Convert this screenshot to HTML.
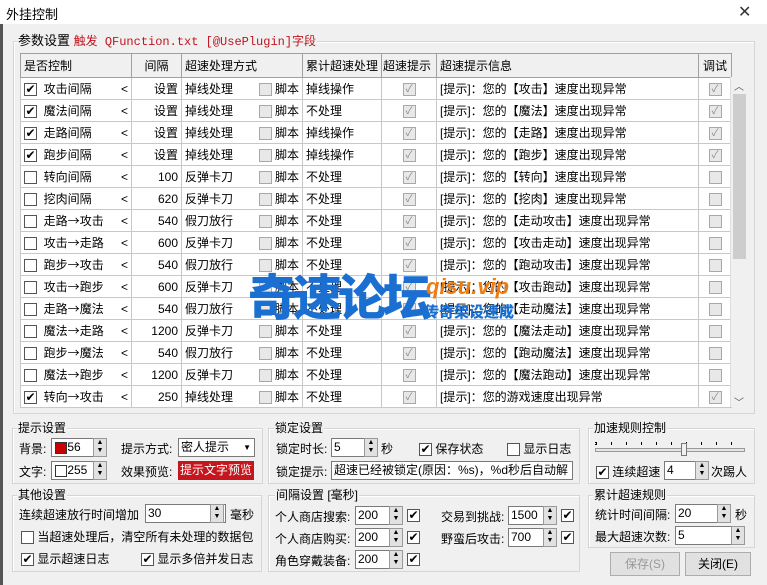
<!DOCTYPE html>
<html><head><meta charset="utf-8"><style>
*{box-sizing:border-box;margin:0;padding:0}
body{width:767px;height:585px;overflow:hidden;background:#f0f0f0;font:12px "Liberation Sans","Noto Sans CJK SC",sans-serif;color:#000;position:relative}
.a{position:absolute;white-space:nowrap}
.gb{position:absolute;border:1px solid #d5d5d5;box-shadow:inset 1px 1px 0 #fff}
.gt{position:absolute;background:#f0f0f0;padding:0 1px;line-height:14px}
table{position:absolute;left:20px;top:53px;border-collapse:collapse;background:#fff;table-layout:fixed}
td{border:1px solid #c8c8c8;height:22px;padding:0 3px;white-space:nowrap;overflow:hidden}
tr.h td{background:#f0f0f0;height:24px;border-color:#a0a0a0;border-bottom:1px solid #a0a0a0}
.cb{display:inline-block;width:13px;height:13px;border:1px solid #555;background:#fff;vertical-align:middle;position:relative;font-size:12px;line-height:11px;text-align:center}
.gc{display:inline-block;width:13px;height:13px;border:1px solid #a8a8a8;background:#e8e8e8;vertical-align:middle;color:#888;font-size:10px;line-height:11px;text-align:center}
.r{text-align:right}
.c{text-align:center}
.ar{font-family:"Noto Sans CJK SC",sans-serif}
.lt{float:right;margin-top:2px}
.in{position:absolute;background:#fff;border:1px solid #7a7a7a;height:19px;line-height:17px;padding-left:2px;font-size:12px}
.sp{position:absolute;width:14px;height:19px;background:#e1e1e1;border:1px solid #999;font-size:7px;line-height:8px;text-align:center;color:#000}
.btn{position:absolute;height:24px;border:1px solid #adadad;background:#e1e1e1;text-align:center;line-height:22px}
</style></head><body>
<div class="a" style="left:0;top:0;width:767px;height:24px;background:#fff"></div>
<div class="a" style="left:6px;top:4px;font-size:13px">外挂控制</div>
<div class="a" style="left:738px;top:2px;font-size:16px;color:#333">✕</div>
<div class="a" style="left:0;top:24px;width:3px;height:561px;background:#555"></div>

<div class="gb" style="left:13px;top:41px;width:742px;height:373px"></div>
<div class="gt" style="left:17px;top:34px;font-size:13px">参数设置 <span style="color:#c0141e;font-family:'Liberation Mono','Noto Sans CJK SC',monospace;font-size:12px">触发 QFunction.txt [@UsePlugin]字段</span></div>

<table>
<colgroup><col style="width:111px"><col style="width:50px"><col style="width:121px"><col style="width:78px"><col style="width:55px"><col style="width:262px"><col style="width:33px"></colgroup>
<tr class="h"><td>是否控制</td><td class="c">间隔</td><td>超速处理方式</td><td>累计超速处理</td><td style="padding:0 1px">超速提示</td><td>超速提示信息</td><td class="c">调试</td></tr>
<tr><td><span class="cb">✔</span>&nbsp; 攻击间隔<span class="lt">&lt;</span></td><td class="r">设置</td><td>掉线处理<span style="float:right"><span class="gc"></span> 脚本</span></td><td>掉线操作</td><td class="c"><span class="gc">✓</span></td><td>[提示]：您的【攻击】速度出现异常</td><td class="c"><span class="gc">✓</span></td></tr>
<tr><td><span class="cb">✔</span>&nbsp; 魔法间隔<span class="lt">&lt;</span></td><td class="r">设置</td><td>掉线处理<span style="float:right"><span class="gc"></span> 脚本</span></td><td>不处理</td><td class="c"><span class="gc">✓</span></td><td>[提示]：您的【魔法】速度出现异常</td><td class="c"><span class="gc">✓</span></td></tr>
<tr><td><span class="cb">✔</span>&nbsp; 走路间隔<span class="lt">&lt;</span></td><td class="r">设置</td><td>掉线处理<span style="float:right"><span class="gc"></span> 脚本</span></td><td>掉线操作</td><td class="c"><span class="gc">✓</span></td><td>[提示]：您的【走路】速度出现异常</td><td class="c"><span class="gc">✓</span></td></tr>
<tr><td><span class="cb">✔</span>&nbsp; 跑步间隔<span class="lt">&lt;</span></td><td class="r">设置</td><td>掉线处理<span style="float:right"><span class="gc"></span> 脚本</span></td><td>掉线操作</td><td class="c"><span class="gc">✓</span></td><td>[提示]：您的【跑步】速度出现异常</td><td class="c"><span class="gc">✓</span></td></tr>
<tr><td><span class="cb"></span>&nbsp; 转向间隔<span class="lt">&lt;</span></td><td class="r">100</td><td>反弹卡刀<span style="float:right"><span class="gc"></span> 脚本</span></td><td>不处理</td><td class="c"><span class="gc">✓</span></td><td>[提示]：您的【转向】速度出现异常</td><td class="c"><span class="gc"></span></td></tr>
<tr><td><span class="cb"></span>&nbsp; 挖肉间隔<span class="lt">&lt;</span></td><td class="r">620</td><td>反弹卡刀<span style="float:right"><span class="gc"></span> 脚本</span></td><td>不处理</td><td class="c"><span class="gc">✓</span></td><td>[提示]：您的【挖肉】速度出现异常</td><td class="c"><span class="gc"></span></td></tr>
<tr><td><span class="cb"></span>&nbsp; 走路<span class="ar">→</span>攻击<span class="lt">&lt;</span></td><td class="r">540</td><td>假刀放行<span style="float:right"><span class="gc"></span> 脚本</span></td><td>不处理</td><td class="c"><span class="gc">✓</span></td><td>[提示]：您的【走动攻击】速度出现异常</td><td class="c"><span class="gc"></span></td></tr>
<tr><td><span class="cb"></span>&nbsp; 攻击<span class="ar">→</span>走路<span class="lt">&lt;</span></td><td class="r">600</td><td>反弹卡刀<span style="float:right"><span class="gc"></span> 脚本</span></td><td>不处理</td><td class="c"><span class="gc">✓</span></td><td>[提示]：您的【攻击走动】速度出现异常</td><td class="c"><span class="gc"></span></td></tr>
<tr><td><span class="cb"></span>&nbsp; 跑步<span class="ar">→</span>攻击<span class="lt">&lt;</span></td><td class="r">540</td><td>假刀放行<span style="float:right"><span class="gc"></span> 脚本</span></td><td>不处理</td><td class="c"><span class="gc">✓</span></td><td>[提示]：您的【跑动攻击】速度出现异常</td><td class="c"><span class="gc"></span></td></tr>
<tr><td><span class="cb"></span>&nbsp; 攻击<span class="ar">→</span>跑步<span class="lt">&lt;</span></td><td class="r">600</td><td>反弹卡刀<span style="float:right"><span class="gc"></span> 脚本</span></td><td>不处理</td><td class="c"><span class="gc">✓</span></td><td>[提示]：您的【攻击跑动】速度出现异常</td><td class="c"><span class="gc"></span></td></tr>
<tr><td><span class="cb"></span>&nbsp; 走路<span class="ar">→</span>魔法<span class="lt">&lt;</span></td><td class="r">540</td><td>假刀放行<span style="float:right"><span class="gc"></span> 脚本</span></td><td>不处理</td><td class="c"><span class="gc">✓</span></td><td>[提示]：您的【走动魔法】速度出现异常</td><td class="c"><span class="gc"></span></td></tr>
<tr><td><span class="cb"></span>&nbsp; 魔法<span class="ar">→</span>走路<span class="lt">&lt;</span></td><td class="r">1200</td><td>反弹卡刀<span style="float:right"><span class="gc"></span> 脚本</span></td><td>不处理</td><td class="c"><span class="gc">✓</span></td><td>[提示]：您的【魔法走动】速度出现异常</td><td class="c"><span class="gc"></span></td></tr>
<tr><td><span class="cb"></span>&nbsp; 跑步<span class="ar">→</span>魔法<span class="lt">&lt;</span></td><td class="r">540</td><td>假刀放行<span style="float:right"><span class="gc"></span> 脚本</span></td><td>不处理</td><td class="c"><span class="gc">✓</span></td><td>[提示]：您的【跑动魔法】速度出现异常</td><td class="c"><span class="gc"></span></td></tr>
<tr><td><span class="cb"></span>&nbsp; 魔法<span class="ar">→</span>跑步<span class="lt">&lt;</span></td><td class="r">1200</td><td>反弹卡刀<span style="float:right"><span class="gc"></span> 脚本</span></td><td>不处理</td><td class="c"><span class="gc">✓</span></td><td>[提示]：您的【魔法跑动】速度出现异常</td><td class="c"><span class="gc"></span></td></tr>
<tr><td><span class="cb">✔</span>&nbsp; 转向<span class="ar">→</span>攻击<span class="lt">&lt;</span></td><td class="r">250</td><td>掉线处理<span style="float:right"><span class="gc"></span> 脚本</span></td><td>不处理</td><td class="c"><span class="gc">✓</span></td><td>[提示]：您的游戏速度出现异常</td><td class="c"><span class="gc">✓</span></td></tr>
</table>
<div class="a" style="left:730px;top:77px;width:18px;height:330px;background:#f0f0f0;border-left:1px solid #ddd"></div>
<div class="a" style="left:733px;top:94px;width:13px;height:165px;background:#cdcdcd"></div>
<div class="a" style="left:734px;top:78px;font-size:10px;color:#555">︿</div>
<div class="a" style="left:734px;top:394px;font-size:10px;color:#555">﹀</div>

<!-- watermark -->
<div class="a" style="left:248px;top:264px;font:900 49px 'Noto Sans CJK SC',sans-serif;color:#1a6fd0;letter-spacing:-4px;line-height:62px">奇速论坛</div>
<div class="a" style="left:426px;top:274px;font:bold italic 22px 'Liberation Sans',sans-serif;color:#f07c10">qisu.vip</div>
<div class="a" style="left:424px;top:301px;font:900 15px 'Noto Sans CJK SC',sans-serif;color:#1a6fd0">传奇架设速成</div>

<!-- 提示设置 -->
<div class="gb" style="left:12px;top:428px;width:251px;height:56px"></div>
<div class="gt" style="left:17px;top:421px">提示设置</div>
<div class="a" style="left:19px;top:440px">背景:</div>
<div class="in" style="left:51px;top:438px;width:56px">&nbsp;&nbsp;&nbsp;&nbsp;56</div>
<div class="a" style="left:55px;top:442px;width:12px;height:12px;background:#c00;border:1px solid #333"></div>
<div class="sp" style="left:93px;top:438px">▲<br>▼</div>
<div class="a" style="left:19px;top:463px">文字:</div>
<div class="in" style="left:51px;top:461px;width:56px">&nbsp;&nbsp;&nbsp;&nbsp;255</div>
<div class="a" style="left:55px;top:465px;width:12px;height:12px;background:#fff;border:1px solid #333"></div>
<div class="sp" style="left:93px;top:461px">▲<br>▼</div>
<div class="a" style="left:121px;top:440px">提示方式:</div>
<div class="in" style="left:178px;top:438px;width:77px">密人提示<span style="position:absolute;right:3px;font-size:8px">▼</span></div>
<div class="a" style="left:121px;top:463px">效果预览:</div>
<div class="a" style="left:178px;top:461px;width:76px;height:19px;background:#c4161c;color:#fff;line-height:19px;padding-left:2px">提示文字预览</div>

<!-- 锁定设置 -->
<div class="gb" style="left:268px;top:428px;width:312px;height:56px"></div>
<div class="gt" style="left:274px;top:421px">锁定设置</div>
<div class="a" style="left:276px;top:440px">锁定时长:</div>
<div class="in" style="left:331px;top:438px;width:47px">5</div>
<div class="sp" style="left:364px;top:438px">▲<br>▼</div>
<div class="a" style="left:381px;top:440px">秒</div>
<div class="a" style="left:419px;top:440px"><span class="cb">✔</span> 保存状态</div>
<div class="a" style="left:507px;top:440px"><span class="cb"></span> 显示日志</div>
<div class="a" style="left:276px;top:463px">锁定提示:</div>
<div class="in" style="left:331px;top:461px;width:242px;overflow:hidden">超速已经被锁定(原因：%s)，%d秒后自动解锁</div>

<!-- 加速规则控制 -->
<div class="gb" style="left:588px;top:428px;width:167px;height:56px"></div>
<div class="gt" style="left:593px;top:421px">加速规则控制</div>
<div class="a" style="left:595px;top:442px;width:150px;height:3px;border-left:1px dotted #000;background:repeating-linear-gradient(90deg,#000 0 1px,transparent 1px 15px)"></div>
<div class="a" style="left:595px;top:448px;width:150px;height:4px;border:1px solid #999;background:#e6e6e6"></div>
<div class="a" style="left:681px;top:443px;width:6px;height:13px;background:#f0f0f0;border:1px solid #777"></div>
<div class="a" style="left:596px;top:463px"><span class="cb">✔</span> 连续超速</div>
<div class="in" style="left:664px;top:461px;width:45px">4</div>
<div class="sp" style="left:695px;top:461px">▲<br>▼</div>
<div class="a" style="left:711px;top:463px">次踢人</div>

<!-- 其他设置 -->
<div class="gb" style="left:12px;top:495px;width:250px;height:77px"></div>
<div class="gt" style="left:17px;top:488px">其他设置</div>
<div class="a" style="left:19px;top:506px">连续超速放行时间增加</div>
<div class="in" style="left:145px;top:504px;width:81px">30</div>
<div class="sp" style="left:210px;top:504px">▲<br>▼</div>
<div class="a" style="left:230px;top:506px">毫秒</div>
<div class="a" style="left:21px;top:528px"><span class="cb"></span> 当超速处理后，清空所有未处理的数据包</div>
<div class="a" style="left:21px;top:550px"><span class="cb">✔</span> 显示超速日志</div>
<div class="a" style="left:141px;top:550px"><span class="cb">✔</span> 显示多倍并发日志</div>

<!-- 间隔设置 -->
<div class="gb" style="left:268px;top:495px;width:312px;height:77px"></div>
<div class="gt" style="left:275px;top:488px">间隔设置 [毫秒]</div>
<div class="a" style="left:275px;top:508px">个人商店搜索:</div>
<div class="in" style="left:355px;top:506px;width:48px">200</div>
<div class="sp" style="left:389px;top:506px">▲<br>▼</div>
<div class="a" style="left:407px;top:508px"><span class="cb">✔</span></div>
<div class="a" style="left:275px;top:530px">个人商店购买:</div>
<div class="in" style="left:355px;top:528px;width:48px">200</div>
<div class="sp" style="left:389px;top:528px">▲<br>▼</div>
<div class="a" style="left:407px;top:530px"><span class="cb">✔</span></div>
<div class="a" style="left:275px;top:552px">角色穿戴装备:</div>
<div class="in" style="left:355px;top:550px;width:48px">200</div>
<div class="sp" style="left:389px;top:550px">▲<br>▼</div>
<div class="a" style="left:407px;top:552px"><span class="cb">✔</span></div>
<div class="a" style="left:441px;top:508px">交易到挑战:</div>
<div class="in" style="left:508px;top:506px;width:49px">1500</div>
<div class="sp" style="left:543px;top:506px">▲<br>▼</div>
<div class="a" style="left:561px;top:508px"><span class="cb">✔</span></div>
<div class="a" style="left:441px;top:530px">野蛮后攻击:</div>
<div class="in" style="left:508px;top:528px;width:49px">700</div>
<div class="sp" style="left:543px;top:528px">▲<br>▼</div>
<div class="a" style="left:561px;top:530px"><span class="cb">✔</span></div>

<!-- 累计超速规则 -->
<div class="gb" style="left:588px;top:495px;width:167px;height:53px"></div>
<div class="gt" style="left:593px;top:488px">累计超速规则</div>
<div class="a" style="left:595px;top:506px">统计时间间隔:</div>
<div class="in" style="left:675px;top:504px;width:56px">20</div>
<div class="sp" style="left:717px;top:504px">▲<br>▼</div>
<div class="a" style="left:735px;top:506px">秒</div>
<div class="a" style="left:595px;top:528px">最大超速次数:</div>
<div class="in" style="left:675px;top:526px;width:70px">5</div>
<div class="sp" style="left:731px;top:526px">▲<br>▼</div>

<div class="btn" style="left:610px;top:552px;width:70px;color:#999">保存(S)</div>
<div class="btn" style="left:685px;top:552px;width:66px">关闭(E)</div>
</body></html>
